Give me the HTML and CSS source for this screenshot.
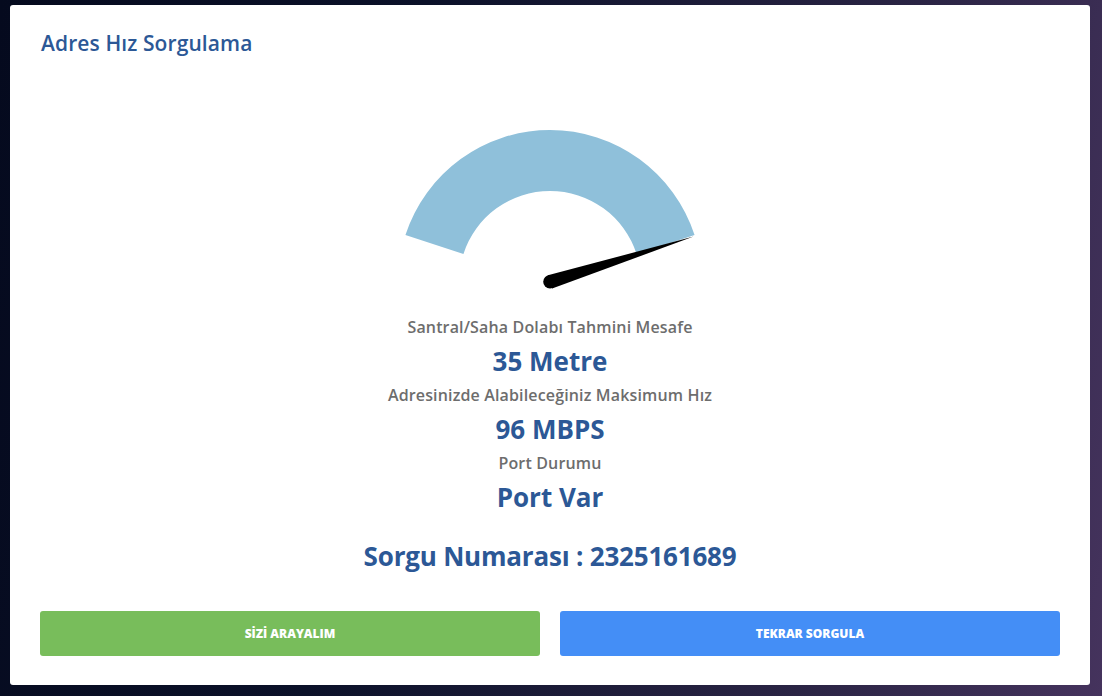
FILE: index.html
```html
<!DOCTYPE html>
<html lang="tr">
<head>
<meta charset="utf-8">
<title>Adres Hız Sorgulama</title>
<link rel="stylesheet" href="styles.css">
</head>
<body>
<main class="card">
  <h1 class="title">Adres Hız Sorgulama</h1>
  <div class="gauge-wrap">
    <svg class="gauge" width="320" height="180" viewBox="0 0 320 180" aria-hidden="true">
      <path d="M 15.44 115.03 A 152 152 0 0 1 304.56 115.03 L 246.55 133.88 A 91 91 0 0 0 73.45 133.88 Z" fill="#8fc0da"/>
      <path d="M 157.9 155.3 L 303.6 116.6 L 162.1 168.4 Z" fill="#000"/>
      <circle cx="160" cy="161.8" r="6.8" fill="#000"/>
    </svg>
  </div>
  <div class="stats">
    <p class="label">Santral/Saha Dolabı Tahmini Mesafe</p>
    <p class="value">35 Metre</p>
    <p class="label">Adresinizde Alabileceğiniz Maksimum Hız</p>
    <p class="value">96 MBPS</p>
    <p class="label">Port Durumu</p>
    <p class="value">Port Var</p>
  </div>
  <p class="query">Sorgu Numarası : 2325161689</p>
  <div class="actions">
    <button class="btn btn-green" type="button">SİZİ ARAYALIM</button>
    <button class="btn btn-blue" type="button">TEKRAR SORGULA</button>
  </div>
</main>
</body>
</html>
```
FILE: styles.css
```css
* { box-sizing: border-box; }
html, body { height: 100%; }
body {
  margin: 0;
  padding: 5px 12px 11px 10px;
  background: linear-gradient(100deg, #050a1e 0%, #0b1129 35%, #2a2444 75%, #45335d 100%);
  font-family: "Open Sans", "Liberation Sans", sans-serif;
}
.card {
  background: #fff;
  border-radius: 3px;
  height: 680px;
  padding: 26px 30px 29px 30px;
  display: flex;
  flex-direction: column;
}
.title {
  margin: 0 0 0 1px;
  font-size: 21px;
  line-height: 24px;
  font-weight: 600;
  color: #2c5896;
  letter-spacing: 0.1px;
}
.gauge-wrap {
  display: flex;
  justify-content: center;
  margin-top: 65px;
}
.gauge { display: block; }
.stats {
  margin-top: 12px;
  text-align: center;
}
.stats p { margin: 0; }
.label {
  font-size: 16px;
  line-height: 30px;
  font-weight: 600;
  color: #6d6d6d;
  letter-spacing: 0.15px;
}
.value {
  font-size: 26px;
  line-height: 38px;
  font-weight: 700;
  color: #2c5896;
}
.query {
  margin: 20px 0 0;
  text-align: center;
  font-size: 26px;
  line-height: 40px;
  font-weight: 700;
  color: #2c5896;
  letter-spacing: -0.2px;
}
.actions {
  margin-top: 35px;
  display: flex;
  gap: 20px;
}
.btn {
  flex: 1;
  height: 45px;
  border: 0;
  border-radius: 3px;
  color: #fff;
  font-family: inherit;
  font-size: 12px;
  font-weight: 800;
  cursor: pointer;
}
.btn-green { background: #78bd5b; }
.btn-blue { background: #448ef6; }
```
